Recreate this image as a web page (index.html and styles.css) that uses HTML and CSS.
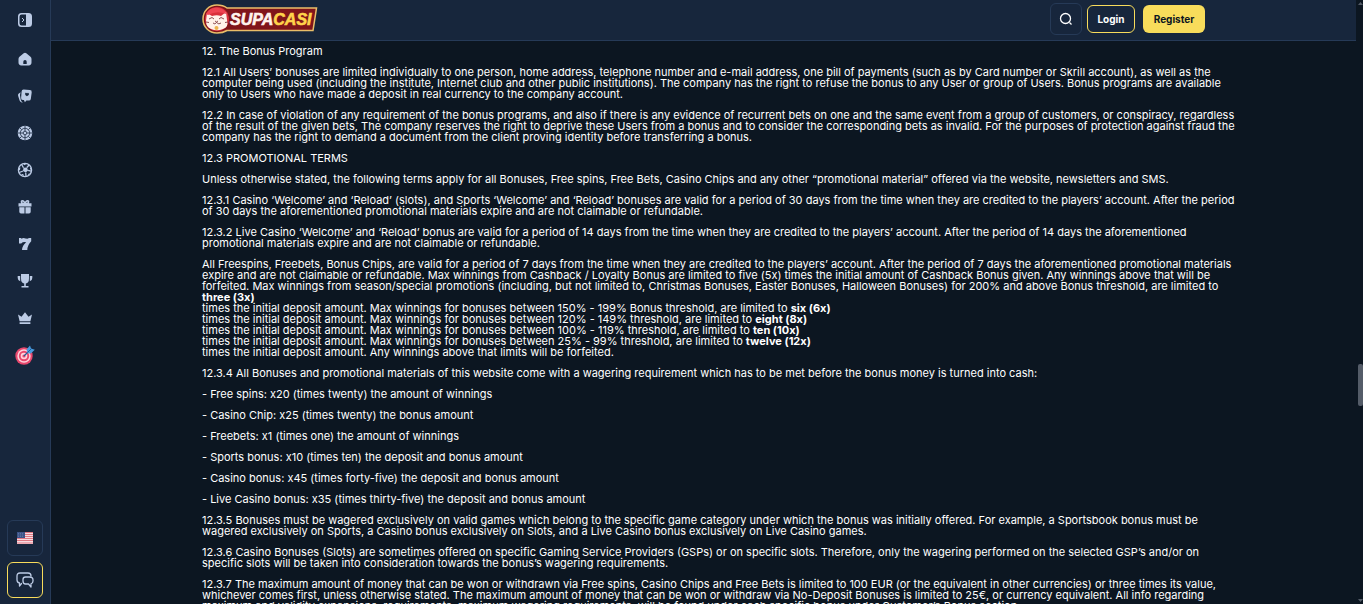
FILE: index.html
```html
<!DOCTYPE html>
<html lang="en">
<head>
<meta charset="utf-8">
<title>Supacasi – Terms and Conditions</title>
<link rel="stylesheet" href="styles.css">
</head>
<body>
<div class="app">
  <nav class="sidebar" aria-label="Main">
    <div class="side-links">
      <button class="side-item" type="button" aria-label="Expand menu">
        <svg class="icon" viewBox="0 0 16 16"><path fill-rule="evenodd" d="M4.500 1h7A3.500 3.500 0 0 1 15 4.500v7a3.500 3.500 0 0 1-3.500 3.500h-7A3.500 3.500 0 0 1 1 11.500v-7A3.500 3.500 0 0 1 4.500 1zm.2 1.500A2.200 2.200 0 0 0 2.500 4.700v6.600a2.200 2.200 0 0 0 2.200 2.200H9v-11z"/><path d="m5 6 2 2-2 2" fill="none" stroke="currentColor"/></svg>
      </button>
      <a class="side-item" href="#" aria-label="Home">
        <svg class="icon" viewBox="0 0 16 16"><path fill-rule="evenodd" d="M6.700 2.200a2 2 0 0 1 2.600 0l4.200 3.600q1 .9 1 2.200v3.600a2.800 2.800 0 0 1-2.800 2.800H4.300a2.800 2.800 0 0 1-2.800-2.800V8q0-1.300 1-2.200zM8 9a1.700 1.700 0 0 0-1.700 1.700v2.300h3.400v-2.300A1.700 1.700 0 0 0 8 9z"/></svg>
      </a>
      <a class="side-item" href="#" aria-label="Casino">
        <svg class="icon" viewBox="0 0 16 16"><path d="M3.600 4.200 1.800 5.500Q.7 6.300 1.100 7.700l1.500 4.800q.5 1.600 2.200 1.900l1 .1Q4 13.500 3.700 11.500L3 7z"/><path fill-rule="evenodd" d="m6.600 1.500 6.200.6a2 2 0 0 1 1.900 2.300l-.9 6.500a2 2 0 0 1-2.200 1.700L9.400 12.400l-1.500 1.800-1-2.100-1-.1a2 2 0 0 1-1.800-2.300l.5-6.300a2 2 0 0 1 2-1.900zM8.500 4.800Q7.500 6 8.600 7.200l1.300 1 1.500-.9Q12.500 6.200 11.700 5.200q-.9-.8-1.600.2-.8-1.100-1.600-.6z"/></svg>
      </a>
      <a class="side-item" href="#" aria-label="Live casino">
        <svg class="icon" viewBox="0 0 16 16"><circle cx="8" cy="8" r="7.300"/><g class="cut"><circle cx="8" cy="8" r="4.700"/><circle cx="8" cy="8" r="1.800"/><path d="M8 .5v3M8 12.500v3M.5 8h3M12.500 8h3M2.700 2.700l2 2M11.300 11.300l2 2M2.700 13.300l2-2M11.300 4.700l2-2M8 4v2M8 10v2M4 8h2M10 8h2"/></g></svg>
      </a>
      <a class="side-item" href="#" aria-label="Sports">
        <svg class="icon line" viewBox="0 0 16 16"><circle cx="8" cy="8" r="6.600"/><path class="solid" d="m6.500 5.800 3.400-.3 1.200 2.900-2.400 2.200L6 9z"/><path d="m6.500 5.800-1.700-3M9.900 5.500 12 3M11.100 8.400l3 .8M8.700 10.600l.3 3.600M6 9l-3.700 1.500"/><path class="solid" d="m6 1.800 3.400-.1L7.700 3.300zM1.600 6l1.800-.5-.4 2.400-1.300.7zM4 12.200l2.200-.1.800 2.200zM13 5l1.200 1.500-.1 1.500-1-.8zM10.500 13.800l1-2 1.800-.2z"/></svg>
      </a>
      <a class="side-item" href="#" aria-label="Bonuses">
        <svg class="icon" viewBox="0 0 16 16"><path fill-rule="evenodd" d="M4 4.200Q2.900 1 5.500 1q1.800 0 2.500 1.800Q8.700 1 10.500 1q2.600 0 1.500 3.200h2.500v3.300h-13V4.200zm1.500-1.800q-.8 1.400 1.300 1.500-.3-1.500-1.300-1.500zm5 0q-1 0-1.300 1.500 2.100-.1 1.300-1.500z"/><path d="M2.300 8.300h5.200v6.200H4a1.700 1.700 0 0 1-1.700-1.700zM8.500 8.300h5.200v4.500a1.700 1.700 0 0 1-1.700 1.700H8.500z"/></svg>
      </a>
      <a class="side-item" href="#" aria-label="Slots">
        <svg class="icon" viewBox="0 0 16 16"><path d="M2 2h2l.5.8q1.500-1.200 4-.4l2 .4L12 2h2.200v3.300Q10.500 9 10.300 14H5q.3-4.600 4.200-7.700-3-.9-5 1.200H2z"/></svg>
      </a>
      <a class="side-item" href="#" aria-label="Tournaments">
        <svg class="icon" viewBox="0 0 16 16"><path d="M4 1h8v4.500q0 4.500-3.200 5V13h2.700v1.500h-7V13h2.700v-2.500Q4 10 4 5.500zM.7 3h2.500v5.200Q.7 7.500.7 5zM12.800 3h2.500v2q0 2.500-2.500 3.200z"/></svg>
      </a>
      <a class="side-item" href="#" aria-label="VIP">
        <svg class="icon" viewBox="0 0 16 16"><path d="m1 4.500 3.500 2.200L8 2.300l3.500 4.400L15 4.500l-1.600 6.800H2.600zM2.600 12.300h10.800V14H2.600z"/></svg>
      </a>
      <a class="side-item" href="#" aria-label="Challenges">
        <svg class="icon target" viewBox="0 0 20 20"><circle cx="9" cy="11" r="8.700" fill="#e8476d"/><circle cx="9" cy="11" r="6.700" fill="#ffd0da"/><circle cx="9" cy="11" r="5.200" fill="#e8476d"/><circle cx="9" cy="11" r="3.300" fill="#ffd0da"/><circle cx="9" cy="11" r="1.600" fill="#e8476d"/><path d="m9 11 6-6" stroke="#245b98" stroke-width="1.300"/><path d="m11.500 4.500 3.500-4 1 3 3.800 1.200-4 3.800-3.300-.2z" fill="#479bdd"/><path d="m12.500 7.500 4-4" stroke="#245b98"/></svg>
      </a>
    </div>
    <div class="side-tools">
      <button class="tool" type="button" aria-label="Language: English">
        <svg class="flag" viewBox="0 0 16 12"><path fill="#f6dce1" d="M0 0h16v12H0z"/><path stroke="#df7883" d="M0 .5h16M0 2.500h16M0 4.500h16M0 6.500h16M0 8.500h16M0 11h16"/><path fill="#3c5488" d="M0 0h8v6H0z"/><path stroke="#7286b0" stroke-dasharray="1 1" stroke-width=".6" d="M1 1.500h6M1 3h6M1 4.500h6"/></svg>
      </button>
      <button class="tool tool-chat" type="button" aria-label="Live chat">
        <svg class="chat" viewBox="0 0 18 18"><path d="M5.500 12.500 3.500 15v-3Q1 11.500 1 9V5q0-3 3-3h8q3 0 3 3"/><path d="M9.500 6h4Q17 6 17 9v1q0 2.200-2 2.800V16l-2.500-3h-3Q7 13 7 10V8.500Q7 6 9.500 6z"/></svg>
      </button>
    </div>
  </nav>

  <div class="page">
    <header class="topbar">
      <div class="topbar-inner">
        <a class="brand" href="#" aria-label="Supacasi">
          <svg class="logo" viewBox="0 0 116 30">
            <path d="M15 1C7 1 1 7 1 15s6 14 14 14q6 0 10-2.500h86L114.500 4H25Q21 1 15 1z" fill="#80151a" stroke="#e9be69" stroke-width="1.500"/>
            <circle cx="15" cy="15" r="12" fill="#d92f3b"/>
            <path d="M4 17 5 9l5 3q5-1.500 9 0l5-4 1 8q2 7-4 9-6 2.500-12 0-5-2-5-8z" fill="#fff1e9"/>
            <path d="M4 10Q9 1 20 5q4 2 4 5-9-4-18 1z" fill="#ef4452"/>
            <path d="m7 15 3-1.500L12 15m5 0 2-1.500 3 1.500m-9 2 1.500 1 1.500-1m-5 2q2 2 3.500-.5Q17 21 19 19M4 18l3 .5m16 0 3-.5" fill="none" stroke="#70252b" stroke-width=".8"/>
            <circle cx="14.500" cy="24" r="2" fill="#edb14d"/>
            <text class="wordmark" x="28" y="21"><tspan class="word-a">SUPA</tspan><tspan class="word-b">CASI</tspan></text>
          </svg>
        </a>
        <div class="actions">
          <button class="search" type="button" aria-label="Search"><svg class="search-icon" viewBox="0 0 14 14"><circle cx="6.500" cy="6.500" r="5"/><path d="m10.500 10.500 2 2"/></svg></button>
          <button class="btn login" type="button">Login</button>
          <button class="btn register" type="button">Register</button>
        </div>
      </div>
    </header>

    <main class="terms">
      <p>12. The Bonus Program</p>
      <p>12.1 All Users’ bonuses are limited individually to one person, home address, telephone number and e-mail address, one bill of payments (such as by Card number or Skrill account), as well as the computer being used (including the institute, Internet club and other public institutions). The company has the right to refuse the bonus to any User or group of Users. Bonus programs are available only to Users who have made a deposit in real currency to the company account.</p>
      <p>12.2 In case of violation of any requirement of the bonus programs, and also if there is any evidence of recurrent bets on one and the same event from a group of customers, or conspiracy, regardless of the result of the given bets, The company reserves the right to deprive these Users from a bonus and to consider the corresponding bets as invalid. For the purposes of protection against fraud the company has the right to demand a document from the client proving identity before transferring a bonus.</p>
      <p>12.3 PROMOTIONAL TERMS</p>
      <p>Unless otherwise stated, the following terms apply for all Bonuses, Free spins, Free Bets, Casino Chips and any other “promotional material” offered via the website, newsletters and SMS.</p>
      <p>12.3.1 Casino ‘Welcome’ and ‘Reload’ (slots), and Sports ‘Welcome’ and ‘Reload’ bonuses are valid for a period of 30 days from the time when they are credited to the players’ account. After the period of 30 days the aforementioned promotional materials expire and are not claimable or refundable.</p>
      <p>12.3.2 Live Casino ‘Welcome’ and ‘Reload’ bonus are valid for a period of 14 days from the time when they are credited to the players’ account. After the period of 14 days the aforementioned promotional materials expire and are not claimable or refundable.</p>
      <p>All Freespins, Freebets, Bonus Chips, are valid for a period of 7 days from the time when they are credited to the players’ account. After the period of 7 days the aforementioned promotional materials expire and are not claimable or refundable. Max winnings from Cashback / Loyalty Bonus are limited to five (5x) times the initial amount of Cashback Bonus given. Any winnings above that will be forfeited. Max winnings from season/special promotions (including, but not limited to, Christmas Bonuses, Easter Bonuses, Halloween Bonuses) for 200% and above Bonus threshold, are limited to <strong>three (3x)</strong><br>times the initial deposit amount. Max winnings for bonuses between 150% - 199% Bonus threshold, are limited to <strong>six (6x)</strong><br>times the initial deposit amount. Max winnings for bonuses between 120% - 149% threshold, are limited to <strong>eight (8x)</strong><br>times the initial deposit amount. Max winnings for bonuses between 100% - 119% threshold, are limited to <strong>ten (10x)</strong><br>times the initial deposit amount. Max winnings for bonuses between 25% - 99% threshold, are limited to <strong>twelve (12x)</strong><br>times the initial deposit amount. Any winnings above that limits will be forfeited.</p>
      <p>12.3.4 All Bonuses and promotional materials of this website come with a wagering requirement which has to be met before the bonus money is turned into cash:</p>
      <p>- Free spins: x20 (times twenty) the amount of winnings</p>
      <p>- Casino Chip: x25 (times twenty) the bonus amount</p>
      <p>- Freebets: x1 (times one) the amount of winnings</p>
      <p>- Sports bonus: x10 (times ten) the deposit and bonus amount</p>
      <p>- Casino bonus: x45 (times forty-five) the deposit and bonus amount</p>
      <p>- Live Casino bonus: x35 (times thirty-five) the deposit and bonus amount</p>
      <p>12.3.5 Bonuses must be wagered exclusively on valid games which belong to the specific game category under which the bonus was initially offered. For example, a Sportsbook bonus must be wagered exclusively on Sports, a Casino bonus exclusively on Slots, and a Live Casino bonus exclusively on Live Casino games.</p>
      <p>12.3.6 Casino Bonuses (Slots) are sometimes offered on specific Gaming Service Providers (GSPs) or on specific slots. Therefore, only the wagering performed on the selected GSP’s and/or on specific slots will be taken into consideration towards the bonus’s wagering requirements.</p>
      <p>12.3.7 The maximum amount of money that can be won or withdrawn via Free spins, Casino Chips and Free Bets is limited to 100 EUR (or the equivalent in other currencies) or three times its value, whichever comes first, unless otherwise stated. The maximum amount of money that can be won or withdraw via No-Deposit Bonuses is limited to 25€, or currency equivalent. All info regarding maximum and validity expansions, requirements, maximum wagering requirements, will be found under each specific bonus under Customer’s Bonus section.</p>
    </main>
  </div>

  <div class="scrollbar" aria-hidden="true">
    <span class="arrow arrow-up"></span>
    <span class="thumb"></span>
    <span class="arrow arrow-down"></span>
  </div>
</div>
</body>
</html>
```
FILE: styles.css
```css
* { box-sizing: border-box; }
body {
  margin: 0;
  background: #0c1621;
  color: #fff;
  font-family: Inter, "Liberation Sans", sans-serif;
  font-size: 11px;
  line-height: 11px;
}
button { font: inherit; color: inherit; padding: 0; cursor: pointer; }
svg { display: block; }

.app { display: flex; height: 100vh; overflow: hidden; }

.sidebar {
  flex: none;
  width: 51px;
  display: flex;
  flex-direction: column;
  justify-content: space-between;
  padding: 0 0 6px;
  background: #17263c;
  border-right: 1px solid #263a57;
}
.side-links { display: flex; flex-direction: column; }
.side-item {
  display: grid;
  place-items: center;
  height: 37px;
  border: 0;
  background: none;
  color: #bccbe5;
}
.side-item:first-child { height: 40px; }
.icon { width: 16px; height: 16px; fill: currentColor; }
.line { fill: none; stroke: currentColor; stroke-width: 1.3; }
.solid { fill: currentColor; stroke: none; }
.cut { fill: none; stroke: #17263c; stroke-width: .8; }
.target { width: 20px; height: 20px; }

.side-tools { display: flex; flex-direction: column; align-items: center; gap: 6px; }
.tool {
  display: grid;
  place-items: center;
  width: 36px;
  height: 36px;
  background: none;
  border: 1px solid #263a57;
  border-radius: 6px;
}
.tool-chat { border-color: #f8dc5b; }
.flag { width: 16px; height: 12px; }
.chat { width: 18px; height: 18px; fill: none; stroke: #bccbe5; stroke-width: 1.3; stroke-linejoin: round; stroke-linecap: round; }

.page { flex: 1; min-width: 0; }
.topbar {
  height: 41px;
  background: #17263c;
  border-bottom: 1px solid #263a57;
}
.topbar-inner {
  max-width: 1003px;
  height: 38px;
  margin: 0 auto;
  display: flex;
  align-items: center;
  justify-content: space-between;
}
.logo { width: 116px; height: 30px; }
.wordmark {
  font: italic 700 16px "Liberation Sans", sans-serif;
  stroke-width: 1;
}
.word-a { fill: #fff3ed; stroke: #fff3ed; stroke-width: .6; }
.word-b { fill: #ffd34b; stroke: #ffd34b; stroke-width: .6; }
.actions { display: flex; align-items: center; gap: 8px; }
.search {
  display: grid;
  place-items: center;
  width: 32px;
  height: 32px;
  border: 1px solid #263a57;
  border-radius: 6px;
  background: none;
  margin-right: -3px;
}
.search-icon { width: 14px; height: 14px; fill: none; stroke: #fff; stroke-width: 1.3; }
.btn { height: 28px; border-radius: 6px; font-size: 10px; font-weight: 700; }
.login { width: 48px; border: 1px solid #f8dc5b; background: none; }
.register { width: 62px; border: 0; background: #f8dc5b; color: #0c1621; }

.terms { max-width: 1003px; margin: 0 auto; padding-top: 5px; }
.terms p { margin: 0 -32px 10px 0; }
.terms strong { font-weight: 700; }

.scrollbar {
  flex: none;
  width: 7px;
  display: grid;
  grid-template-rows: 5px 359px 42px 1fr 5px;
  justify-items: end;
  background: #0c1621;
}
.thumb { grid-row: 3; width: 5px; border-radius: 2px; background: #545c68; }
.arrow { width: 5px; height: 3px; background: #545c68; }
.arrow-up { grid-row: 1; align-self: end; clip-path: polygon(50% 0, 100% 100%, 0 100%); }
.arrow-down { grid-row: 5; clip-path: polygon(0 0, 100% 0, 50% 100%); }
```
